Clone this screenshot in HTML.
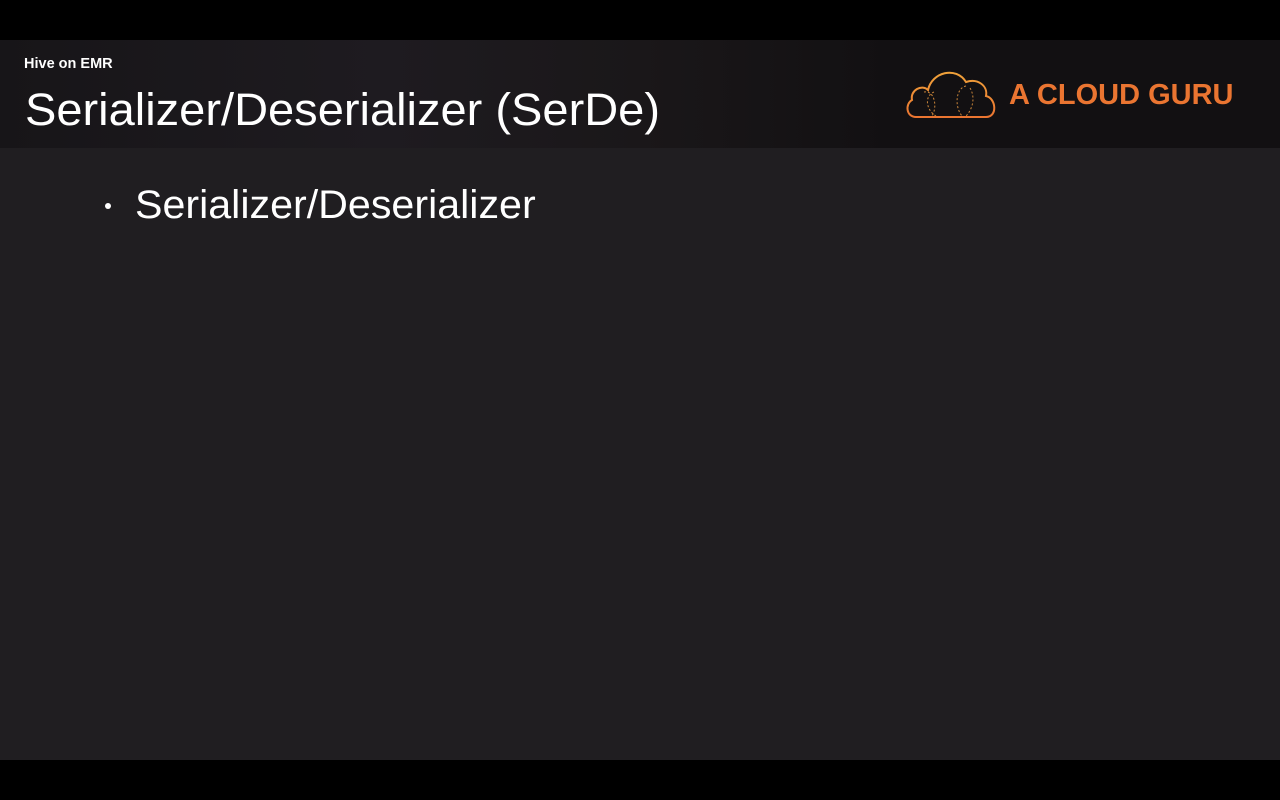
<!DOCTYPE html>
<html><head><style>
body{margin:0;width:1280px;height:800px;background:#000;overflow:hidden;font-family:"Liberation Sans",sans-serif;position:relative}
.hdr{position:absolute;left:0;top:40px;width:1280px;height:108px;background:linear-gradient(90deg,#171518 0%,#1e1b20 30%,#1a1719 50%,#121012 70%,#121012 100%)}
.main{position:absolute;left:0;top:148px;width:1280px;height:612px;background:#201e21}
.sub{position:absolute;left:24px;top:56px;color:#fff;font-weight:bold;font-size:14.5px}
.title{position:absolute;left:25px;top:84px;color:#fff;font-size:45px;white-space:nowrap;transform-origin:left;transform:scaleX(1.045)}
.bul{position:absolute;left:135px;top:183px;color:#fff;font-size:40px;white-space:nowrap;transform-origin:left;transform:scaleX(1.03)}
.dot{position:absolute;left:105px;top:203px;width:6px;height:6px;border-radius:3px;background:#fff}
.logo{position:absolute;left:1009px;top:79px;color:#ea7531;font-weight:bold;font-size:29px;white-space:nowrap}
</style></head><body>
<div class="hdr"></div>
<div class="main"></div>
<div class="sub">Hive on EMR</div>
<div class="title">Serializer/Deserializer (SerDe)</div>
<div class="dot"></div>
<div class="bul">Serializer/Deserializer</div>
<svg style="position:absolute;left:904px;top:66px" width="94" height="56" viewBox="0 0 94 56">
<defs><linearGradient id="g" x1="0" y1="0" x2="0" y2="1"><stop offset="0" stop-color="#f0a23a"/><stop offset="1" stop-color="#ea7531"/></linearGradient></defs>
<path d="M12 51 C2 51 1 38 8 34 C6 24 18 18 24 24 C28 6 52 0 62 16 C74 12 84 20 82 30 C92 32 94 51 82 51 Z" fill="none" stroke="url(#g)" stroke-width="2"/>
<path d="M20 26 C30 24 34 40 28 50 M30 26 C20 30 22 44 32 50 M62 20 C52 22 50 40 58 50 M66 22 C72 32 68 44 62 50" fill="none" stroke="#c9853a" stroke-width="1" stroke-dasharray="2 2"/>
</svg>
<div class="logo">A CLOUD GURU</div>
</body></html>
